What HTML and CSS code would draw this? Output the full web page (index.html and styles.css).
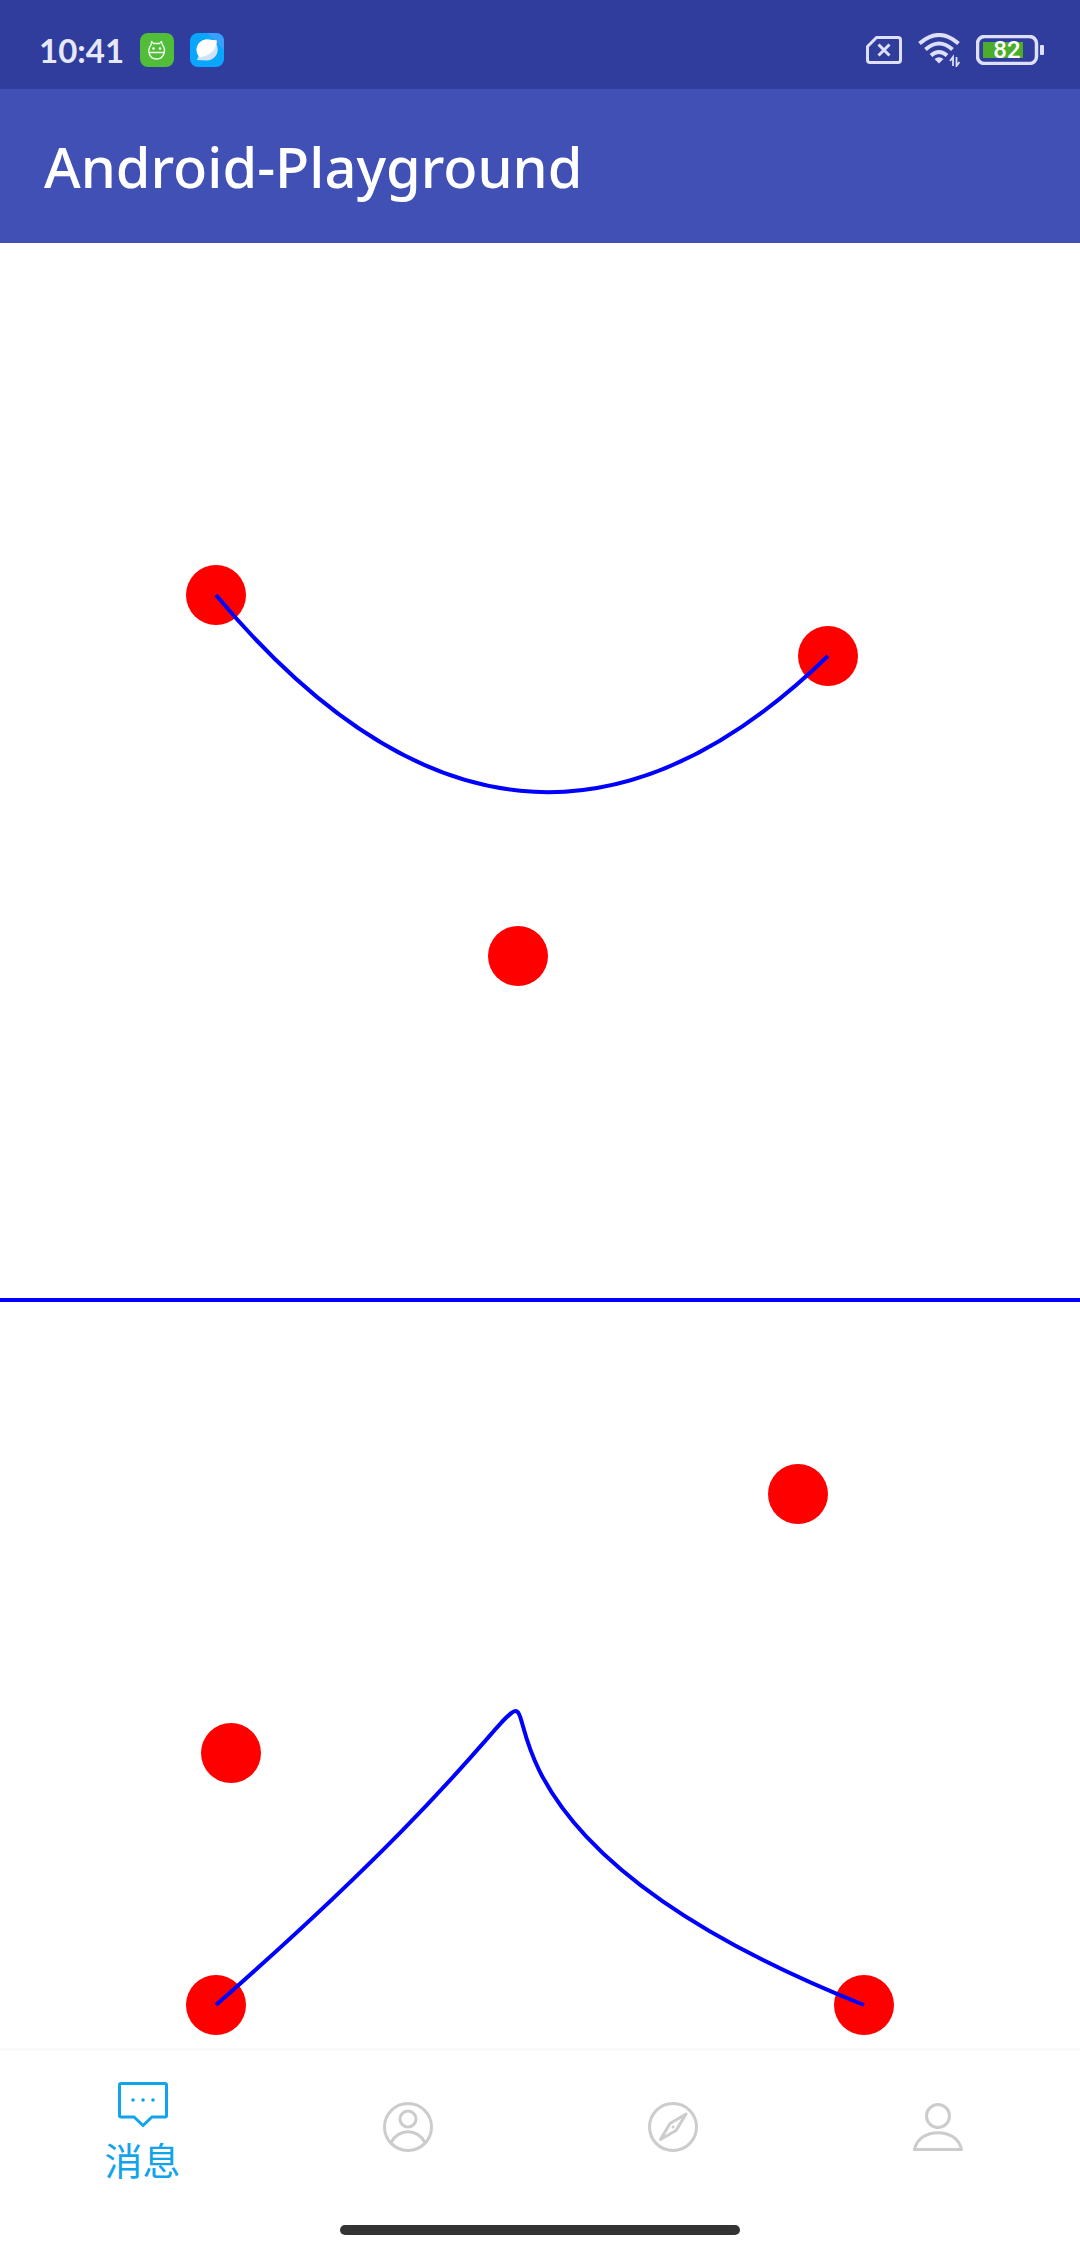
FILE: index.html
```html
<!DOCTYPE html>
<html lang="zh-CN">
<head>
<meta charset="utf-8">
<meta name="viewport" content="width=device-width, initial-scale=1">
<title>Android-Playground</title>
<link rel="stylesheet" href="styles.css">
</head>
<body>
<div class="status-bar">
  <div class="status-left">
    <time class="clock">10:41</time>
    <svg class="app-icon" viewBox="0 0 34 34" aria-hidden="true">
      <rect width="34" height="34" rx="8" fill="#51bd39"/>
      <g fill="none" stroke="#f3fff0" stroke-width="1.3" stroke-linejoin="round" stroke-linecap="round">
        <path d="M11 12 11.500 8.500 13.500 10.500H19.500L21.500 8.500 22.500 12C26 16 25 26 16.500 26S7.500 16 11 12Z"/>
        <path d="M9 19.500H24.500"/>
      </g>
      <circle cx="13.500" cy="15.500" r="1.300" fill="#fff"/>
      <circle cx="20" cy="15.500" r="1.300" fill="#fff"/>
    </svg>
    <svg class="app-icon" viewBox="0 0 34 34" aria-hidden="true">
      <rect width="34" height="34" rx="8" fill="#08a6fd"/>
      <path d="M17 0H26A8 8 0 0 1 34 8V17Z" fill="#389ffc"/>
      <path d="M7 27 8.500 23C3 14 10 6 18 6.500L27 7.500 26.500 11C30 18 26 27 17 27.500Z" fill="#cfe2fb"/>
      <path d="M10 24.500C3 17 8 6 18 6.500L26.500 7.500C27 17 20 22 10 24.500Z" fill="#fff"/>
    </svg>
  </div>
  <div class="status-right">
    <svg class="sim-icon" viewBox="0 0 36 28" aria-hidden="true" fill="none" stroke="#dde0f8" stroke-width="3">
      <path d="M10.500 1.500H32Q34.500 1.500 34.500 4V24Q34.500 26.500 32 26.500H4Q1.500 26.500 1.500 24V10.500Z" stroke-linejoin="round"/>
      <path d="M12.500 8.500 23.500 19.500M23.500 8.500 12.500 19.500"/>
    </svg>
    <svg class="wifi-icon" viewBox="0 0 42 34" aria-hidden="true">
      <g fill="none" stroke="#dde0f8" stroke-width="4">
        <path d="M1.500 10.500Q21 -6.500 40.500 10.500"/>
        <path d="M7.500 16.500Q21 4.500 34.500 16.500"/>
        <path d="M13 22.500Q21 15.500 29 22.500"/>
      </g>
      <path d="M16.500 26Q21 22.500 25.500 26L21 30.500Z" fill="#dde0f8"/>
      <path d="M35 33V24L32 28M38.500 24V33L41.500 29" fill="none" stroke="#dde0f8" stroke-width="1.800"/>
    </svg>
    <svg class="battery-icon" viewBox="0 0 68 30" role="img" aria-label="82%">
      <rect x="1.500" y="1.500" width="59" height="27" rx="7" fill="none" stroke="#dde0f8" stroke-width="3.500"/>
      <rect x="7" y="7" width="40" height="16" fill="#4bad2b"/>
      <rect x="64" y="10" width="4" height="10" rx="1" fill="#dde0f8"/>
      <text class="battery-level" x="31" y="23" text-anchor="middle">82</text>
    </svg>
  </div>
</div>
<header class="toolbar">
  <h1 class="title">Android-Playground</h1>
</header>
<main class="content">
  <svg class="curve" viewBox="0 243 1080 1055" role="img" aria-label="Quadratic curve">
    <circle class="point" cx="216" cy="595" r="30"/>
    <circle class="point" cx="518" cy="956" r="30"/>
    <circle class="point" cx="828" cy="656" r="30"/>
    <path class="line" d="M216 595Q518 956 828 656"/>
  </svg>
  <hr class="divider">
  <svg class="curve" viewBox="0 1302 1080 746" role="img" aria-label="Cubic curve">
    <circle class="point" cx="798" cy="1494" r="30"/>
    <circle class="point" cx="231" cy="1753" r="30"/>
    <circle class="point" cx="216" cy="2005" r="30"/>
    <circle class="point" cx="864" cy="2005" r="30"/>
    <path class="line" d="M216 2005C798 1494 231 1753 864 2005"/>
  </svg>
</main>
<nav class="tabs">
  <button class="tab tab-active" type="button">
    <svg class="tab-icon" viewBox="0 0 52 52" aria-hidden="true">
      <path d="M4 4.500H48Q49.500 4.500 49.500 6V36.500Q49.500 38 48 38H35L26 46.500 17 38H4Q2.500 38 2.500 36.500V6Q2.500 4.500 4 4.500Z"/>
      <g class="dots"><circle cx="16" cy="21" r="1.800"/><circle cx="26" cy="21" r="1.800"/><circle cx="36" cy="21" r="1.800"/></g>
    </svg>
    <span class="tab-label">消息</span>
  </button>
  <button class="tab" type="button" aria-label="联系人">
    <svg class="tab-icon" viewBox="0 0 52 52" aria-hidden="true">
      <circle cx="26" cy="26" r="23.500"/>
      <circle cx="26" cy="18" r="8"/>
      <path d="M9 41.500C17 27 35 27 43 41.500"/>
    </svg>
  </button>
  <button class="tab" type="button" aria-label="发现">
    <svg class="tab-icon" viewBox="0 0 52 52" aria-hidden="true">
      <circle cx="26" cy="26" r="23.500"/>
      <path d="M39 13 23 22.500 13.500 38.500 29 29.500Z" stroke-linejoin="round"/>
      <circle class="pivot" cx="26" cy="26" r="1.500"/>
    </svg>
  </button>
  <button class="tab" type="button" aria-label="我">
    <svg class="tab-icon" viewBox="0 0 52 52" aria-hidden="true">
      <circle cx="26" cy="15" r="11.500"/>
      <path d="M2.500 48.500C7 26 45 26 49.500 48.500Z" stroke-linejoin="round"/>
    </svg>
  </button>
</nav>
<div class="gesture-area"><div class="gesture-bar"></div></div>
</body>
</html>
```
FILE: styles.css
```css
* {
  box-sizing: border-box;
}

body {
  margin: 0;
  min-height: 100vh;
  display: flex;
  flex-direction: column;
  background: #fff;
  font-family: "Noto Sans", "Noto Sans CJK SC", sans-serif;
}

.status-bar {
  height: 89px;
  padding: 10px 36px 0 39px;
  display: flex;
  align-items: center;
  justify-content: space-between;
  background: #303d9d;
  color: #e6e8fa;
}

.status-left,
.status-right {
  display: flex;
  align-items: center;
  gap: 16px;
}

.clock {
  font-family: Lato, sans-serif;
  font-size: 33px;
  line-height: 40px;
  font-weight: 700;
}

.app-icon {
  width: 34px;
  height: 34px;
}

.sim-icon {
  width: 36px;
  height: 28px;
}

.wifi-icon {
  width: 42px;
  height: 34px;
}

.battery-icon {
  width: 68px;
  height: 30px;
}

.battery-level {
  font: 500 24px Roboto, sans-serif;
  fill: #fff;
}

.toolbar {
  height: 154px;
  padding: 0 44px;
  display: flex;
  align-items: center;
  background: #4050b5;
  color: #fff;
}

.title {
  margin: 0;
  font-size: 56px;
  line-height: 68px;
  font-weight: 500;
}

.content {
  flex: 1;
}

.curve {
  display: block;
  width: 100%;
}

.point {
  fill: #f00;
}

.line {
  fill: none;
  stroke: #00f;
  stroke-width: 4px;
}

.divider {
  height: 4px;
  margin: 0;
  border: 0;
  background: #00f;
}

.tabs {
  height: 154px;
  padding: 0 10px;
  display: flex;
  border-top: 3px solid #fafafa;
}

.tab {
  flex: 1;
  padding: 0;
  display: flex;
  flex-direction: column;
  align-items: center;
  justify-content: center;
  gap: 14px;
  border: 0;
  background: none;
  color: #ccc;
  font: inherit;
}

.tab-active {
  color: #12a4ea;
}

.tab-icon {
  width: 52px;
  height: 52px;
  fill: none;
  stroke: currentColor;
  stroke-width: 3px;
}

.dots,
.pivot {
  fill: currentColor;
  stroke: none;
}

.tab-label {
  font-size: 38px;
  line-height: 30px;
}

.gesture-area {
  height: 46px;
  padding-top: 23px;
}

.gesture-bar {
  width: 37%;
  height: 10px;
  margin: 0 auto;
  border-radius: 5px;
  background: #333;
}
```
